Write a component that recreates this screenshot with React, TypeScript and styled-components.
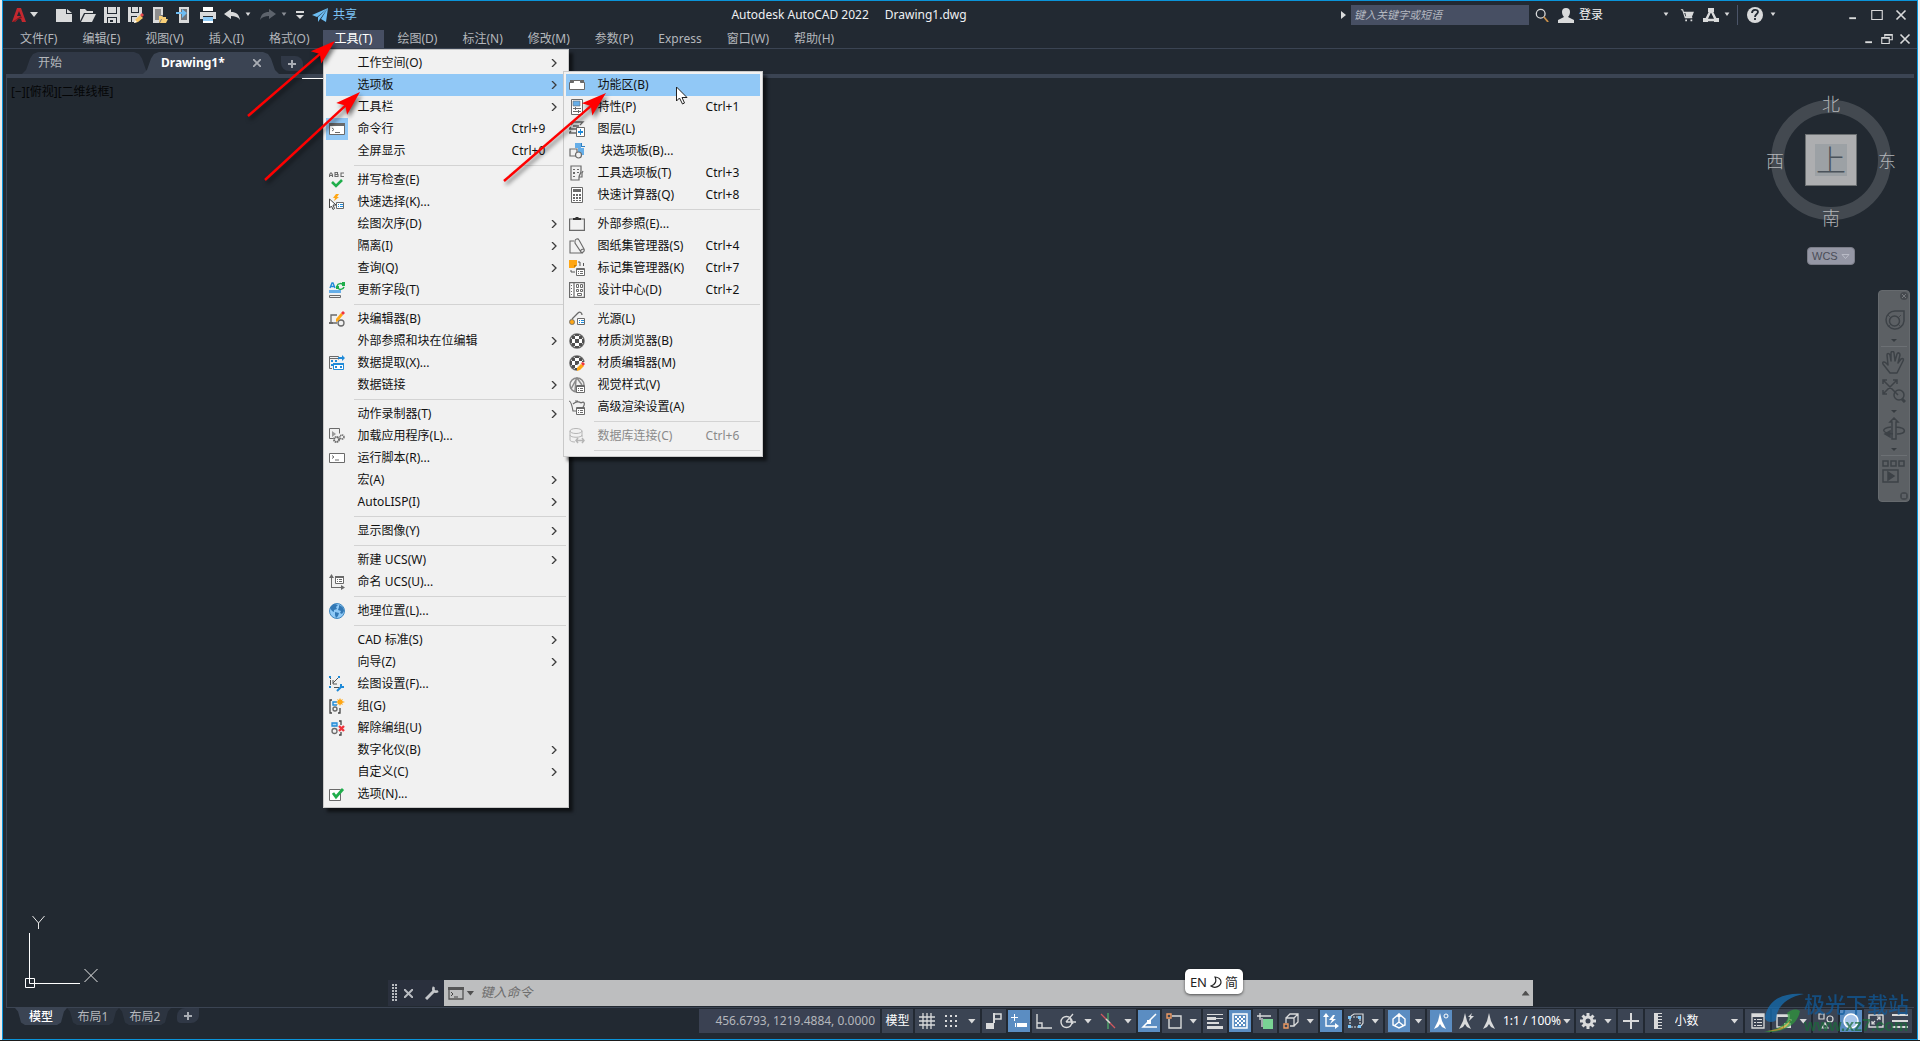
import React from "react";
import styled, { createGlobalStyle, css } from "styled-components";

/* ---------- palette ---------- */
const c = {
  chrome: "#222932",
  canvas: "#222931",
  panel: "#3b4453",
  field: "#474f63",
  active: "#5b8dc2",
  edge: "#0a94da",
  text: "#b4b7bc",
  icon: "#d9dadb",
  menu: "#f1f1f1",
  hover: "#91c8f6",
  grey: "#6a6a6a",
  blue: "#1f8ad8",
  sky: "#66aee8",
  orange: "#ffa613",
  green: "#1fae4b",
  red: "#f0343c",
};

const GlobalStyle = createGlobalStyle`
  *, *::before, *::after { box-sizing: border-box; }
  body {
    margin: 0;
    background: #1b1b1b;
    font: 12px/16px "Noto Sans", "Open Sans", "Noto Sans CJK SC", sans-serif;
    color: ${c.text};
  }
  button, input, select { font: inherit; color: inherit; }
`;

/* ---------- shared parts ---------- */
const Desktop = styled.div`
  height: 100vh;
  padding: 0 2px;
  background: #ececec;
  border-bottom: 1px solid #1b1b1b;
  overflow: hidden;
`;

const Window = styled.div`
  height: 100%;
  display: flex;
  flex-direction: column;
  background: ${c.chrome};
  border: 1px solid ${c.edge};
`;

const Plain = styled.button`
  display: flex;
  align-items: center;
  padding: 0;
  border: 0;
  background: none;
  white-space: nowrap;
`;

const Glyph = styled.svg<{ $w?: number; $h?: number }>`
  display: block;
  flex: none;
  width: ${(p) => p.$w ?? 16}px;
  height: ${(p) => p.$h ?? p.$w ?? 16}px;
  fill: none;
`;

type Art = React.ReactNode;

const Pic = ({ art, size = 16 }: { art: Art; size?: number }) => (
  <Glyph $w={size} viewBox="0 0 16 16" aria-hidden="true">
    {art}
  </Glyph>
);

const Caret = styled.span<{ $small?: boolean; $dim?: boolean }>`
  flex: none;
  width: 8px;
  height: 5px;
  background: ${(p) => (p.$dim ? "#8b8f96" : c.icon)};
  clip-path: ${(p) =>
    p.$small
      ? "polygon(20% 10%, 80% 10%, 50% 80%)"
      : "polygon(0 0, 100% 0, 50% 100%)"};
`;

/* ---------- title bar ---------- */
const TitleBar = styled.header`
  flex: none;
  height: 29px;
  display: flex;
  align-items: center;
  padding: 0 10px 2px 9px;
`;

const QuickTools = styled.div`
  display: flex;
  align-items: center;
  gap: 8px;
`;

const AppButton = styled(Plain)`
  gap: 4px;
  margin-right: 10px;
`;

const Split = styled(Plain)`
  gap: 4px;
`;

const ShareButton = styled(Plain)`
  gap: 5px;
  color: #7cc3f5;
`;

const Caption = styled.h1`
  flex: 1;
  display: flex;
  justify-content: center;
  gap: 16px;
  margin: 0;
  font-size: 12px;
  font-weight: 400;
  line-height: 16px;
  color: #eef0f2;
  white-space: nowrap;
`;

const InfoTools = styled.div`
  display: flex;
  align-items: center;
`;

const SearchBox = styled.input`
  width: 178px;
  height: 20px;
  margin: 0 6px 0 5px;
  padding: 0 3px;
  border: 0;
  background: ${c.field};
  &::placeholder {
    color: #b4b8c0;
    font-size: 11px;
    font-style: italic;
    opacity: 1;
  }
`;

const Account = styled(Plain)`
  width: 112px;
  margin: 0 10px 0 9px;
  gap: 5px;
  color: #f4f4f4;
  & > span:last-child {
    margin-left: auto;
  }
`;

const StoreTools = styled.div`
  display: flex;
  align-items: center;
  gap: 9px;
  padding-right: 6px;
  border-right: 1px solid #4b5468;
  height: 20px;
`;

const HelpButton = styled(Split)`
  gap: 6px;
  margin: 0 70px 0 9px;
`;

const WindowButtons = styled.div`
  display: flex;
  align-items: center;
  gap: 12px;
`;

/* ---------- menu bar ---------- */
const MenuBar = styled.nav`
  flex: none;
  height: 19px;
  display: flex;
  justify-content: space-between;
  padding: 0 6px 0 5px;
  border-bottom: 1px solid ${c.panel};
`;

const MenuList = styled.div`
  display: flex;
  gap: 1px;
`;

const MenuSlot = styled.div`
  position: relative;
  z-index: 5;
`;

const MenuButton = styled(Plain)<{ $open?: boolean }>`
  height: 18px;
  padding: 0 12px;
  background: ${(p) => (p.$open ? "#474f63" : "none")};
  color: ${(p) => (p.$open ? "#ffffff" : c.text)};
`;

const DocButtons = styled.div`
  display: flex;
  align-items: center;
  gap: 6px;
`;

/* ---------- drop-down menus ---------- */
const Panel = styled.div<{ $sub?: boolean }>`
  position: absolute;
  top: ${(p) => (p.$sub ? "-3px" : "19px")};
  left: ${(p) => (p.$sub ? "237px" : "0")};
  width: ${(p) => (p.$sub ? "200px" : "246px")};
  padding: 2px;
  border: 1px solid #c9c9c9;
  background: ${c.menu};
  box-shadow: 4px 4px 3px rgba(0, 0, 0, 0.55);
  color: #111111;
`;

const EntrySlot = styled.div`
  position: relative;
`;

const Entry = styled(Plain)<{ $hot?: boolean }>`
  width: 100%;
  height: 22px;
  background: ${(p) => (p.$hot ? c.hover : "none")};
  &:disabled {
    color: #8a8a8a;
  }
`;

const IconCell = styled.span<{ $checked?: boolean }>`
  flex: none;
  width: 22px;
  height: 22px;
  display: grid;
  place-items: center;
  background: ${(p) => (p.$checked ? c.hover : "none")};
`;

const EntryLabel = styled.span`
  flex: 1;
  padding-left: 10px;
  text-align: left;
`;

const Keys = styled.span`
  width: 54px;
  text-align: left;
`;

const Divider = styled.hr`
  height: 1px;
  margin: 3px 0 3px 28px;
  border: 0;
  background: #d3d3d3;
`;

const Chevron = styled(Glyph)`
  margin-right: 8px;
`;

/* ---------- document tabs ---------- */
const DocTabs = styled.div`
  flex: none;
  height: 25px;
  display: flex;
  align-items: flex-end;
  padding-left: 19px;
`;

const DocTab = styled.div<{ $active?: boolean }>`
  width: ${(p) => (p.$active ? "136px" : "128px")};
  height: 22px;
  display: flex;
  align-items: center;
  justify-content: space-between;
  margin-right: ${(p) => (p.$active ? "2px" : "-7px")};
  padding: 0 18px 0 ${(p) => (p.$active ? "18px" : "16px")};
  background: ${(p) => (p.$active ? c.panel : "#303846")};
  color: ${(p) => (p.$active ? "#ffffff" : c.text)};
  font-weight: ${(p) => (p.$active ? 700 : 400)};
  clip-path: polygon(
    0 100%, 4px 82%, 8px 30%, 11px 9%, 16px 0,
    calc(100% - 16px) 0, calc(100% - 11px) 9%, calc(100% - 8px) 30%, calc(100% - 4px) 82%, 100% 100%
  );
  button { color: inherit; font-weight: inherit; }
`;

const AddTab = styled(Plain)<{ $bottom?: boolean }>`
  width: 22px;
  height: 15px;
  justify-content: center;
  margin: ${(p) => (p.$bottom ? "0 0 0 6px" : "0 0 3px")};
  background: #303846;
  border-radius: ${(p) => (p.$bottom ? "8px 0 8px 4px" : "0 8px 4px 8px")};
`;

/* ---------- drawing area ---------- */
const Canvas = styled.main`
  position: relative;
  flex: 1;
  min-height: 0;
  display: flex;
  flex-direction: column;
  justify-content: space-between;
  align-items: flex-start;
  margin: 0 3px;
  background: ${c.canvas};
  border-top: 4px solid ${c.panel};
  border-left: 1px solid ${c.panel};
  border-bottom: 1px solid ${c.panel};
`;

const Viewport = styled.div`
  padding: 6px 4px;
  color: #050607;
`;

const Edge = styled.div`
  position: absolute;
  top: 0;
  left: 295px;
  width: 24px;
  height: 1px;
  background: #ffffff;
`;

const UcsMark = styled(Glyph)`
  position: absolute;
  left: 16px;
  bottom: 19px;
`;

const Cube = styled.div`
  position: absolute;
  top: 15px;
  right: 17px;
  width: 132px;
  display: grid;
  grid-template-columns: 20px 52px 20px;
  grid-template-rows: 20px 21px 52px 21px 20px;
  justify-content: space-between;
  justify-items: center;
  align-items: center;
  font: 18px/20px "Noto Sans CJK SC", sans-serif;
  font-weight: 300;
  color: #b3b5b8;
`;

const Ring = styled.span`
  position: absolute;
  top: 7px;
  left: 6px;
  width: 120px;
  height: 120px;
  border: 13px solid #434950;
  border-radius: 50%;
`;

const Compass = styled.button<{ $area: string }>`
  position: relative;
  grid-area: ${(p) => p.$area};
  padding: 0;
  border: 0;
  background: none;
  font: inherit;
  color: inherit;
`;

const Face = styled.button`
  position: relative;
  grid-area: 3 / 2;
  width: 52px;
  height: 52px;
  display: grid;
  place-items: center;
  padding: 0;
  border: 1px solid #6c7072;
  background: #adaeb0;
  span {
    width: 32px;
    height: 32px;
    background: #9ca1a5;
    color: #4b535b;
    font: 300 30px/28px "Noto Sans CJK SC", sans-serif;
  }
`;

const Wcs = styled.button`
  position: absolute;
  top: 169px;
  right: 59px;
  width: 48px;
  height: 18px;
  display: flex;
  align-items: center;
  justify-content: space-between;
  padding: 0 4px;
  border: 1px solid #7b7d88;
  border-radius: 4px;
  background: #9597a5;
  color: #4a4d57;
  font: 11px/14px "Liberation Sans", sans-serif;
`;

const NavBar = styled.div`
  position: absolute;
  top: 212px;
  right: 4px;
  width: 32px;
  height: 212px;
  display: flex;
  flex-direction: column;
  align-items: center;
  padding: 18px 0 0;
  border-radius: 4px;
  background: #5c6064;
  border: 1px solid #666a6e;
`;

const NavButton = styled(Plain)<{ $top?: number }>`
  margin-top: ${(p) => p.$top ?? 0}px;
`;

const NavCaret = styled.span`
  width: 6px;
  height: 3px;
  margin-top: 7px;
  background: #373c41;
  clip-path: polygon(0 0, 100% 0, 50% 100%);
`;

const NavRule = styled.hr`
  width: 26px;
  height: 1px;
  margin: 4px 0;
  border: 0;
  background: #6c7074;
`;

const NavCorner = styled(Plain)<{ $low?: boolean }>`
  position: absolute;
  right: 1px;
  ${(p) => (p.$low ? css`bottom: 1px;` : css`top: 1px;`)}
`;

const CommandLine = styled.form`
  width: 60%;
  height: 26px;
  display: flex;
  align-items: stretch;
  margin: 0 auto 1px;
  background: #bdbebf;
`;

const CommandGrip = styled.div`
  width: 56px;
  display: flex;
  align-items: center;
  justify-content: space-between;
  padding: 0 5px 0 4px;
  background: #2a303d;
  & > :nth-child(2) {
    margin-right: 6px;
  }
`;

const CommandInput = styled.input`
  flex: 1;
  padding: 0 6px;
  border: 0;
  background: none;
  outline: 0;
  color: #333333;
  &::placeholder {
    color: #6d6d6d;
    font-size: 13px;
    font-style: italic;
    opacity: 1;
  }
`;

const PromptButton = styled(Plain)`
  gap: 2px;
  padding-left: 4px;
`;

const DarkCaret = styled.span<{ $up?: boolean }>`
  width: 8px;
  height: 5px;
  margin: ${(p) => (p.$up ? "auto 3px auto 0" : "0")};
  background: #505050;
  clip-path: ${(p) =>
    p.$up ? "polygon(0 100%, 50% 0, 100% 100%)" : "polygon(0 0, 100% 0, 50% 100%)"};
`;

const ImeBadge = styled.div`
  position: absolute;
  right: 671px;
  bottom: 13px;
  height: 25px;
  display: flex;
  align-items: center;
  gap: 3px;
  padding: 0 5px;
  border-radius: 5px;
  background: #ffffff;
  box-shadow: 0 1px 3px rgba(0, 0, 0, 0.6);
  color: #222222;
  font-size: 13px;
`;

/* ---------- footer ---------- */
const Footer = styled.footer`
  flex: none;
  height: 31px;
  display: flex;
  justify-content: space-between;
  align-items: flex-start;
  padding: 0 5px 0 12px;
`;

const LayoutTabs = styled.div`
  display: flex;
`;

const LayoutTab = styled(Plain)<{ $active?: boolean }>`
  height: 17px;
  justify-content: center;
  width: 52px;
  background: ${(p) => (p.$active ? c.panel : "#2c3440")};
  color: ${(p) => (p.$active ? "#ffffff" : c.text)};
  font-weight: ${(p) => (p.$active ? 500 : 400)};
  clip-path: polygon(0 0, 100% 0, calc(100% - 3px) 20%, calc(100% - 6px) 85%, calc(100% - 10px) 100%, 10px 100%, 6px 85%, 3px 20%);
`;

const StatusBar = styled.div`
  display: flex;
  gap: 2px;
  margin-top: 1px;
`;

const Coordinates = styled.output`
  width: 181px;
  height: 24px;
  padding: 0 5px;
  background: #3a4152;
  text-align: right;
  line-height: 24px;
`;

const StatusGroup = styled.div<{ $w: number }>`
  width: ${(p) => p.$w}px;
  height: 24px;
  display: flex;
  align-items: center;
  justify-content: space-around;
  background: ${c.panel};
`;

const StatusButton = styled(Plain)<{ $on?: boolean }>`
  height: ${(p) => (p.$on ? "22px" : "24px")};
  width: ${(p) => (p.$on ? "22px" : "auto")};
  margin: ${(p) => (p.$on ? "1px 0" : "0")};
  justify-content: center;
  background: ${(p) => (p.$on ? c.active : "none")};
  color: #ffffff;
`;

const StatusSelect = styled.label<{ $w: number }>`
  width: ${(p) => p.$w}px;
  display: flex;
  align-items: center;
  justify-content: space-between;
  color: #ffffff;
  select {
    flex: 1;
    min-width: 0;
    appearance: none;
    padding: 0;
    border: 0;
    background: none;
  }
`;

/* ---------- overlays ---------- */
const Marks = styled(Glyph)`
  position: absolute;
  top: 34px;
  left: 240px;
  z-index: 9;
  pointer-events: none;
  filter: drop-shadow(2px 3px 2px rgba(0, 0, 0, 0.55));
`;

const Pointer = styled(Glyph)`
  position: absolute;
  top: 86px;
  left: 676px;
  z-index: 9;
`;

const Watermark = styled.div`
  position: absolute;
  right: 11px;
  bottom: 7px;
  display: flex;
  align-items: center;
  opacity: 0.72;
  pointer-events: none;
`;

const WatermarkText = styled.div`
  display: flex;
  flex-direction: column;
  gap: 4px;
  font: 500 21px/22px "Noto Sans CJK SC", sans-serif;
  color: #0f5c9e;
  small {
    font: 700 16px/16px "Liberation Sans", sans-serif;
    color: #1a6b3a;
  }
`;

/* ---------- icon drawings ---------- */
const L = c.icon;
const G = c.grey;

const top: Record<string, Art> = {
  create: <path fill={L} d="M0 2h10v5h6v8H0zM11 2l5 4h-5z" />,
  open: <path fill={L} d="M0 14V2h5l2 2h6v2H4zM1 15 5 7h11l-4 8z" />,
  save: (
    <>
      <path fill={L} d="M0 0h16v16H0z" />
      <path fill={c.chrome} d="M3 0h1v6h8V0h1v7H3zM3 10h10v1H4v5H3zM12 11h1v5h-1zM6 13h3v2H6z" />
    </>
  ),
  saveAs: (
    <>
      <path fill={L} d="M0 0h14v8l-6 7H0z" />
      <path fill={c.chrome} d="M3 0h1v5h6V0h1v6H3zM3 9h6v1H4v5H3z" />
      <path fill="#f7c766" d="m7 13 5-5 3 3-5 4-4 1z" />
      <path fill="#e8484a" d="m12 8 2-2 2 2-2 2z" />
      <path fill="#fff" d="m7 13 2 2-3 1z" />
    </>
  ),
  openWeb: (
    <>
      <path fill="#747474" d="M1 0h10v16H1z" />
      <path fill={L} d="M1 0h10v8H9V2H3v11h4v3H1z" />
      <path fill="#8d8d8d" d="M3 2h6v11H3z" />
      <path fill="#f8cf78" d="M7 9h3l1 1h3v2H9l-2 4zM8 16l2-4h6l-2 4z" />
    </>
  ),
  saveWeb: (
    <>
      <path fill={L} d="M3 0h10v16H3z" />
      <path fill="#6f747b" d="M5 2h6v11H5z" />
      <path fill="#6ebcf2" d="M0 5h6V2l5 4-5 5V7H0z" />
    </>
  ),
  print: (
    <>
      <path fill="#fff" d="M3 0h10v4H3z" />
      <path fill={L} d="M0 5h16v7h-3V9H3v3H0z" />
      <path fill="#8ecbf7" d="M3 10h10v4H3z" />
      <path fill="#fff" d="M3 14h10v2H3z" />
    </>
  ),
  undo: <path fill={L} d="m0 7 7-5v3c5 0 8 2 9 8-2-3-5-4-9-4v3z" />,
  redo: <path fill="#5d636c" d="m16 7-7-5v3c-5 0-8 2-9 8 2-3 5-4 9-4v3z" />,
  share: <path fill="#6dbdf2" d="M16 1 0 8l5 2zM16 1 6 10v5l2-3zM16 1l-7 11 5 3z" />,
  find: (
    <>
      <circle cx="6.500" cy="6.500" r="5" stroke={L} strokeWidth="1.500" />
      <path stroke="#c98f4a" strokeWidth="2" d="m10 10 5 6" />
    </>
  ),
  person: <path fill={L} d="M4 5a4 4 0 0 1 8 0c0 2-1 4-2 5l6 3v3H0v-3l6-3C5 9 4 7 4 5z" />,
  cart: (
    <>
      <path stroke={L} strokeWidth="1.300" d="M1 2h2l3 9h8M4 5h11l-2 5H6" />
      <path fill={L} d="M6 5h9l-2 5H7zM6 13h2v2H6zm6 0h2v2h-2z" />
    </>
  ),
  a360: (
    <>
      <path stroke={L} strokeWidth="2.500" d="M8 3 3 13h10z" strokeLinejoin="round" />
      <path fill={L} d="M5 1h6v4H5zM0 11h5v4H0zm11 0h5v4h-5z" />
      <path fill={c.chrome} d="M8 6 6 11h4z" />
    </>
  ),
  min: <path fill={L} d="M3 11h9v2.500H3z" />,
  max: <path stroke={L} strokeWidth="1.500" d="M1 2h14v12H1z" />,
  close: <path stroke={L} strokeWidth="2.200" d="m2 2 12 12M14 2 2 14" />,
  restore: <path stroke={L} strokeWidth="1.500" d="M5 5V2h10v7h-4M1 6h10v8H1zM5 3h10M1 7h10" />,
};

const sheet = (x: number, y: number, col = G) => (
  <>
    <path fill="#fff" stroke={col} d={`M${x}.5 ${y}.5h7v6h-7z`} />
    <path fill={c.blue} d={`M${x + 2} ${y + 2}h1v1h-1zm2 0h3v1h-3zm-2 2h1v1h-1zm2 0h3v1h-3z`} />
  </>
);

const greySheet = (
  <>
    <path fill="#fff" stroke={G} d="M7.500 8.500h8v7h-8zM7 9.500h9" />
    <path fill={G} d="M9 11h1v1H9zm2 0h3v1h-3zm-2 2h1v1H9zm2 0h3v1h-3z" />
  </>
);

const checkBall = (
  <>
    <circle cx="8" cy="8" r="7" fill="#fff" stroke={G} strokeWidth="1.600" />
    <path fill="#4f4f4f" d="M6 6h4v4H6zM3 3h3v3H3zm7 0h3v3h-3zM3 10h3v3H3zm7 0h3v3h-3zM6 1h4v2H6zm0 12h4v2H6zM1 6h2v4H1zm12 0h2v4h-2z" />
  </>
);

const art: Record<string, Art> = {
  prompt: (
    <>
      <path fill="#fff" stroke={G} d="M.5 2.500h15v11H.5z" />
      <path fill={G} d="M0 2h16v3H0z" />
      <path stroke={G} d="m3 7 2 1.500L3 10M6 11.500h5" />
    </>
  ),
  spell: (
    <>
      <path stroke={G} strokeWidth="1.100" d="M.5 5V3l1-2h1l1 2v2M.5 3.500h3M6 .5h2.500v2H6zm0 2h3v2H6zM15 1h-3v3.500h3" />
      <path stroke={c.green} strokeWidth="2.600" d="m3 10 4 4 6-6" />
    </>
  ),
  quick: (
    <>
      <path fill="#fff" stroke="#444" d="M.5 5v9l2-2 1.500 3.500 1.500-1L4 11h3z" />
      <path fill={c.orange} d="M7 0 4 4h2L5 7l5-4H8l2-3z" />
      {sheet(7, 8)}
    </>
  ),
  field: (
    <>
      <path stroke={c.blue} strokeWidth="1.400" d="m1 6 2-5h1l2 5M2 4.500h3" />
      <path stroke={c.green} strokeWidth="1.500" d="M8 4c1-3 5-3 6-1M15 5c-1 3-5 3-6 1" />
      <path fill={c.green} d="M13 0h3v4h-3zM7 4h3v3H7z" />
      <path fill={c.sky} d="M0 8h12v3H0z" />
      <path stroke={G} d="M.5 13.500h11v2H.5z" />
    </>
  ),
  blockEdit: (
    <>
      <path stroke={G} strokeWidth="1.300" d="M2 12V4h6M2 12h6" />
      <path fill={G} d="M0 11h4v2H0z" />
      <circle cx="12" cy="12" r="3" stroke={G} strokeWidth="1.300" />
      <path fill={c.orange} d="m7 8 5-6 2 2-5 6-2 1z" />
      <path fill={c.red} d="m12 2 2-2 2 2-2 2z" />
    </>
  ),
  extract: (
    <>
      <path stroke={G} d="M3 13.500H.5V1.500h9v3M0 3.500h9" />
      <path fill={c.blue} d="M2 5h2v2H2zm4 0h2v2H6zM2 9h2v2H2zM9 2h4V0l3 3-3 3V4H9z" />
      <path stroke={c.blue} fill="#fff" d="M4.500 8.500h10v6h-10z" />
      <path fill={c.blue} d="M4 8h11v2H4zM6 11h2v2H6zm5 0h2v2h-2z" />
    </>
  ),
  load: (
    <>
      <path stroke={G} d="M4 10.500H.5V.5h10v5" />
      <path fill="#9a9a9a" d="M3 3v6l4-3z" />
      <circle cx="7.500" cy="11.500" r="2.500" stroke={G} strokeWidth="2" strokeDasharray="1.500 .5" />
      <circle cx="13" cy="9" r="2" stroke={G} strokeWidth="1.500" strokeDasharray="1.200 .5" />
    </>
  ),
  script: (
    <>
      <path fill="#fff" stroke={G} d="M.5 3.500h15v9H.5z" />
      <path stroke={G} d="m3 5.500 2 1.500-2 1.500M6 10h4" />
    </>
  ),
  ucs: (
    <>
      <path stroke={G} d="M2.500 14V3M2 13.500h12" />
      <path fill={G} d="M0 4h5L2.500 0zM12 11v5l4-2.500z" />
      <path fill="#fff" stroke={G} d="M6.500 2.500h8v7h-8z" />
      <path fill={G} d="M6 2h9v2H6zM8 5h1v1H8zm2 0h3v1h-3zM8 7h1v1H8zm2 0h3v1h-3z" />
    </>
  ),
  globe: (
    <>
      <circle cx="8" cy="8" r="7.500" fill="#8fc9f6" stroke="#3f87bf" />
      <path fill="#3278b5" d="M1 5c1-2 3-4 5-4l3 1-2 2 1 2-3 1v2L3 8zM10 2c3 1 5 3 5 6l-2 3-2-1 1-2-3-1 1-3zM6 9l4 1-1 3-2 2-1-3z" />
    </>
  ),
  draft: (
    <>
      <path stroke="#555" d="M1.500 1v2M1.500 4v5M9 2 4 7M4 4v4h4M5 11.500h5" />
      <path fill={c.blue} d="M0 0h2v2H0zM9 0h2v2H9zM0 10h2v2H0z" />
      <path stroke={c.blue} strokeWidth="2" d="m8 15 4-4M12 8v3h3" />
    </>
  ),
  group: (
    <>
      <path stroke="#444" strokeWidth="1.300" d="M3 2H1v13h2M9 15h2v-5" />
      <path stroke={c.blue} strokeWidth="1.400" d="M8 4H4v3h4" />
      <circle cx="6" cy="11" r="2" stroke={G} strokeWidth="1.400" />
      <path fill={c.orange} d="m11 0 1 2 2-1-1 2 3 1-3 1 1 2-2-1-1 2-1-2-2 1 1-2-2-1 2-1-1-2 2 1z" />
    </>
  ),
  ungroup: (
    <>
      <path stroke="#444" strokeWidth="1.300" d="M10 1h2v4M12 12v3h-2" />
      <path fill="#a8d5f7" stroke={c.blue} strokeWidth="1.300" d="M3 3h5v3H3z" />
      <circle cx="5.500" cy="11" r="2.500" stroke={G} strokeWidth="1.300" />
      <path stroke={c.red} strokeWidth="2.400" d="m10 6 5 5M15 6l-5 5" />
    </>
  ),
  options: (
    <>
      <path fill="#fff" stroke={G} d="M.5 3.500h11v11H.5z" />
      <path stroke={c.green} strokeWidth="2.800" d="m4 7 3 4 7-8" />
    </>
  ),
  ribbon: (
    <>
      <path fill={G} d="M1 3h4v3H1zm10 0h4v3h-4z" />
      <path fill="#fff" stroke={G} d="M.5 12.500v-7h4v-2h7v2h4v7z" />
    </>
  ),
  props: (
    <>
      <path fill="#fff" stroke={G} d="M2.500.5h11v15h-11z" />
      <path fill={c.sky} stroke={G} strokeWidth=".6" d="M4 2h7v5H4z" />
      <path stroke={G} d="M4 9.500h8M4 12.500h8M6.500 8v3M9.500 11v3" />
    </>
  ),
  layers: (
    <>
      <path stroke={G} strokeWidth="1.300" d="M2 4 5 1h9l-3 3M0 8h7M0 12h7M2 6l-2 2M2 10l-2 2M4 5h6" />
      <path fill="#fff" stroke={G} d="M7.500 6.500h8v9h-8z" />
      <path fill={c.blue} d="M9 10h5v2H9zM11 8h1v6h-1z" />
    </>
  ),
  blocks: (
    <>
      <path fill={c.sky} d="M6 0h6v5H6zM9 5h6v7H9z" />
      <path fill="#2f7fc2" d="M12 0h1v3h3v1h-4z" />
      <path fill={c.menu} stroke={G} strokeWidth="1.200" d="M1 13V6h7v7z" />
      <circle cx="9.500" cy="12" r="3" stroke={G} strokeWidth="1.200" fill={c.menu} />
    </>
  ),
  toolPal: (
    <>
      <path stroke={G} strokeWidth="1.200" d="M12 6V1H2v14h8v-3M12 6c0 3-2 4-2 6h3V8l1-2" />
      <path fill={G} d="M4 4h2v1H4zm4 0h2v1H8zM4 7h2v2H4zm4 0h2v1H8zM4 11h2v1H4z" />
    </>
  ),
  calc: (
    <>
      <path stroke={G} fill="#fff" d="M2.500.5h11v15h-11z" />
      <path fill={G} d="M4 2h8v3H4zM4 7h2v2H4zm3 0h2v2H7zm3 0h2v2h-2zM4 10h2v2H4zm3 0h2v2H7zm3 0h2v2h-2zM4 13h2v1H4zm3 0h2v1H7zm3 0h2v1h-2z" />
    </>
  ),
  xref: (
    <>
      <path stroke={G} strokeWidth="1.200" d="M4 3H.6v11.400h14.800V3H12" />
      <path fill="#333" d="M4 2h2l1-1h2l1 1h2v2H4z" />
    </>
  ),
  sheets: (
    <>
      <path stroke={G} strokeWidth="1.100" d="M5 3H1v12h13M6 3c0-2 3-3 4-1l5 9c1 2-1 4-3 3L6 5zM12 14c-1-1 0-3 3-3" />
    </>
  ),
  markup: (
    <>
      <path fill={c.orange} d="M0 0h8v5L5 8H0z" />
      <path fill="#c97f00" d="M5 5h3L5 8z" />
      <path stroke="#555" d="M9 2h2v4M14.500 3v3M2 10v2h4" />
      {greySheet}
    </>
  ),
  design: (
    <>
      <path stroke={G} strokeWidth="1.200" fill="#fff" d="M.6.6h14.800v14.800H.6zM5 1v14" />
      <path stroke={G} d="M7.500 2.500h2v3h-2zm4 0h2v3h-2zm-4 5h2v2h-2zm4 0h2v2h-2zM8.500 11.500h4v2h-4zM2.500 3v1M2.500 6v1M2.500 9v1M2.500 12v1" />
    </>
  ),
  light: (
    <>
      <path stroke={G} strokeWidth="1.300" d="m3 8 6-6c2-2 4 0 4 2M1 9l4 4" />
      <circle cx="3" cy="11" r="2.500" fill={c.orange} stroke={G} strokeWidth=".8" />
      {sheet(8, 7)}
    </>
  ),
  matBrowse: checkBall,
  matEdit: (
    <>
      {checkBall}
      <path fill={c.menu} d="M8 10 12 7h4v9H8z" />
      <path fill={c.orange} d="m8 13 4-4 3 2-4 4-3 1z" />
      <path fill={c.red} d="m12 8 2-1 2 2-2 2z" />
    </>
  ),
  visual: (
    <>
      <circle cx="8" cy="8" r="7" stroke="#8a8a8a" strokeWidth="1.500" />
      <path stroke="#8a8a8a" strokeWidth="1.500" d="M2 12 8 1l5 7M6 14 7 3" />
      {greySheet}
    </>
  ),
  render: (
    <>
      <path stroke={G} strokeWidth="1.200" d="M0 2c2 0 3 4 4 10h4M4 5c2-2 6-3 8-1M6 2h3M12 4c4-3 4 2 2 4" />
      {greySheet}
    </>
  ),
  db: (
    <g stroke="#b5b5b5">
      <ellipse cx="7" cy="3" rx="6" ry="2.500" />
      <path d="M1 3v9c0 1 2 2 5 2M13 3v6M1 7c0 3 12 3 12 0" />
      <path strokeWidth="1.500" d="M7 12.500h8M9 10l-2 2.500L9 15M13 10l2 2.500-2 2.500" />
    </g>
  ),
};

const status: Record<string, Art> = {
  grid: <path stroke={L} strokeWidth="1.300" d="M4 0v16M8 0v16M12 0v16M0 4h16M0 8h16M0 12h16" />,
  snap: <path fill={L} d="M2 2h2v2H2zm5 0h2v2H7zm5 0h2v2h-2zM2 7h2v2H2zm5 0h2v2H7zm5 0h2v2h-2zM2 12h2v2H2zm5 0h2v2H7zm5 0h2v2h-2z" />,
  infer: (
    <>
      <path fill={L} d="M0 10h8v6H0zM7 0h2v10H7z" />
      <path stroke={L} strokeWidth="1.500" d="M8 1h7v5H8z" />
    </>
  ),
  dynamic: <path fill="#fff" d="M0 4h3V1h1v3h3v1H4v3H3V5H0zM6 10h10v4H6zM4 10h1v4H4z" />,
  ortho: <path stroke={L} strokeWidth="1.400" d="M1 1v14h15M1 10h5v5" />,
  polar: (
    <>
      <circle cx="6.500" cy="9" r="5.500" stroke={L} strokeWidth="1.400" />
      <path stroke={L} strokeWidth="1.300" d="M6 9h10M6 9l7-8M10 6l3 5" />
    </>
  ),
  iso: (
    <>
      <path stroke="#d2575f" strokeWidth="1.300" d="m1 1 14 14" />
      <path stroke="#4fae69" strokeWidth="1.300" d="M8 0v16" />
      <path stroke={L} strokeWidth="1.500" d="m6 6 4 4" />
    </>
  ),
  track: (
    <>
      <path stroke="#fff" strokeWidth="1.500" d="M15 1 2 14h14" />
      <path fill="#fff" d="M6 7h4v4H6z" />
    </>
  ),
  osnap: (
    <>
      <path stroke={L} strokeWidth="1.400" d="M6 3h9v12H3V6" />
      <path stroke="#ef9a63" strokeWidth="1.400" d="M1 1h4v4H1z" />
    </>
  ),
  weight: <path fill={L} d="M0 1h16v1H0zM0 4h9v3H0zM9 5h7v1H9zM0 9h12v2H0zM0 13h16v3H0z" />,
  transp: (
    <>
      <path stroke="#fff" strokeWidth="1.500" d="M1 1h14v14H1z" />
      <path fill="#fff" d="M3 3h2v2H3zm4 0h2v2H7zm4 0h2v2h-2zM5 5h2v2H5zm4 0h2v2H9zM3 7h2v2H3zm4 0h2v2H7zm4 0h2v2h-2zM5 9h2v2H5zm4 0h2v2H9zm-6 2h2v2H3zm4 0h2v2H7zm4 0h2v2h-2z" />
    </>
  ),
  cycle: (
    <>
      <path stroke={L} strokeWidth="1.300" d="M3 0v7M0 3h14M5 5v9" />
      <path fill="#79d394" d="M6 6h10v10H6z" />
    </>
  ),
  osnap3d: (
    <>
      <path stroke={L} strokeWidth="1.300" d="M3 10V5h8v8H7M3 5l4-4h8v8l-4 4M11 5l4-4" />
      <path stroke="#ef9a63" strokeWidth="1.400" d="M1 11h4v4H1z" />
    </>
  ),
  ducs: (
    <>
      <path stroke="#fff" strokeWidth="1.400" d="M3 2v11h11" />
      <path fill="#fff" d="M0 4h6L3 0zM12 10v6l4-3zM10 2 6 7h3l-2 4 6-5h-3l2-4z" />
    </>
  ),
  filter: (
    <>
      <path stroke={L} strokeWidth="1.200" strokeDasharray="2 1" d="M2 4h10v10H2z" />
      <path stroke={L} strokeWidth="1.200" d="m3 3 3-2h9v9l-2 3" />
      <path fill="#7cc6fa" d="M0 3h3v3H0zm10 0h3v3h-3zM0 12h3v3H0zm10 0h3v3h-3z" />
    </>
  ),
  gizmo: (
    <>
      <path stroke="#fff" strokeWidth="1.400" d="M8 1 2 6v6l6 3 6-3V6zM8 4v5l-5 4M8 9l5 4" />
      <path fill="#fff" d="M6 4h4L8 0z" />
    </>
  ),
  scaleVis: (
    <>
      <path fill="#fff" d="M7 0 5 8l-4 8 4-2 2-3 2 3 4 2-4-8z" />
      <circle cx="13" cy="3" r="2" stroke="#fff" />
    </>
  ),
  scaleAuto: <path fill={L} d="M7 0 5 8l-4 8 4-2 2-3 2 3 4 2-4-8zM14 0l-4 4h2l-1 4 5-5h-3z" />,
  scale: <path fill={L} d="M8 0 6 8l-4 8 4-2 2-3 2 3 4 2-4-8z" />,
  gear: (
    <>
      <circle cx="8" cy="8" r="4" stroke={L} strokeWidth="3" />
      <path stroke={L} strokeWidth="3" d="M8 0v3M8 13v3M0 8h3M13 8h3M2.500 2.500l2 2M11.500 11.500l2 2M13.500 2.500l-2 2M4.500 11.500l-2 2" />
    </>
  ),
  plus: <path fill={L} d="M7 0h2v7h7v2H9v7H7V9H0V7h7z" />,
  ruler: <path fill={L} d="M4 0h8v1H8v2h4v1H8v2h4v1H8v2h4v1H8v2h4v1H8v2h4v2H4z" />,
  quickProps: (
    <>
      <path stroke={L} strokeWidth="1.300" d="M2 1h12v14H2z" />
      <path fill={L} d="M2 1h12v3H2zM4 6h2v1H4zm3 0h5v1H7zM4 9h2v1H4zm3 0h5v1H7zm-3 3h2v1H4zm3 0h5v1H7z" />
    </>
  ),
  lock: (
    <>
      <path stroke={L} strokeWidth="1.400" d="M7 14H1V2h12v5" />
      <path fill={L} d="M1 2h12v2H1zM8 10h7v5H8z" />
      <path stroke={L} strokeWidth="1.200" d="M12 10V8c0-2 4-2 4 0" />
    </>
  ),
  isolate: (
    <>
      <path stroke={L} strokeWidth="1.200" d="M1 1h5v5H1zM4 15l3-5 3 5z" />
      <circle cx="12" cy="6" r="3" stroke={L} strokeWidth="1.200" />
    </>
  ),
  graphics: <circle cx="8" cy="8" r="7" fill="#a9c6ea" stroke="#fff" strokeWidth="1.500" />,
  clean: (
    <>
      <path stroke={L} strokeWidth="1.400" d="M1 2h14v12H1z" />
      <path stroke={L} strokeWidth="1.200" d="m4 11 3-3M9 7l3-3M4 8v3h3M9 4h3v3" />
    </>
  ),
  custom: <path fill={L} d="M0 1h16v2H0zM0 7h16v2H0zM0 13h16v2H0z" />,
};

const D = "#3d4247";
const nav: Record<string, Art> = {
  wheel: (
    <g stroke={D} strokeWidth="1.500">
      <path d="M12 2h9v10a9 9 0 1 1-9-10z" />
      <circle cx="11.500" cy="12" r="5" />
      <path d="m5 18 3-3M15 15l3 3M5 6l3 3M15 9l3-3" strokeWidth=".8" />
    </g>
  ),
  hand: (
    <path stroke={D} strokeWidth="1.500" strokeLinejoin="round" d="M8 22 1 13c-1-2 1-3 3-1l2 2L5 4c0-2 2-2 3 0l1 6V2c0-2 3-2 3 0l1 8 2-7c1-2 3-1 3 1l-2 8 3-4c2-1 3 0 2 2l-4 8-2 4z" />
  ),
  zoom: (
    <g stroke={D} strokeWidth="1.500">
      <path d="m1 1 15 15M15 1 1 15M1 5V1h4M11 1h4v4M1 11v4h4" />
      <circle cx="17" cy="16" r="5" />
      <path strokeWidth="3" d="m20 20 3 3" />
    </g>
  ),
  orbit: (
    <g stroke={D} strokeWidth="1.500">
      <path d="M10 22V5H8l4-4 4 4h-2v17zM9 10c-10 1-10 6 2 7M14 10c12 1 10 7 1 7" />
      <path fill={D} d="m3 17 5-3v6z" />
    </g>
  ),
  motion: (
    <g stroke={D} strokeWidth="1.500">
      <path d="M1 1h5v5H1zM9 1h5v5H9zM17 1h5v5h-5zM1 10h15v12H1z" />
      <path fill={D} d="m6 12 6 4-6 4z" />
    </g>
  ),
};

/* ---------- menu contents ---------- */
interface Item {
  label?: string;
  icon?: string;
  keys?: string;
  more?: boolean;
  checked?: boolean;
  disabled?: boolean;
  hot?: boolean;
  children?: Item[];
}
const rule: Item = {};

const paletteMenu: Item[] = [
  { label: "功能区(B)", icon: "ribbon", hot: true },
  { label: "特性(P)", icon: "props", keys: "Ctrl+1" },
  { label: "图层(L)", icon: "layers" },
  { label: "\u00a0块选项板(B)...", icon: "blocks" },
  { label: "工具选项板(T)", icon: "toolPal", keys: "Ctrl+3" },
  { label: "快速计算器(Q)", icon: "calc", keys: "Ctrl+8" },
  rule,
  { label: "外部参照(E)...", icon: "xref" },
  { label: "图纸集管理器(S)", icon: "sheets", keys: "Ctrl+4" },
  { label: "标记集管理器(K)", icon: "markup", keys: "Ctrl+7" },
  { label: "设计中心(D)", icon: "design", keys: "Ctrl+2" },
  rule,
  { label: "光源(L)", icon: "light" },
  { label: "材质浏览器(B)", icon: "matBrowse" },
  { label: "材质编辑器(M)", icon: "matEdit" },
  { label: "视觉样式(V)", icon: "visual" },
  { label: "高级渲染设置(A)", icon: "render" },
  rule,
  { label: "数据库连接(C)", icon: "db", keys: "Ctrl+6", disabled: true },
  rule,
];

const toolsMenu: Item[] = [
  { label: "工作空间(O)", more: true },
  { label: "选项板", more: true, hot: true, children: paletteMenu },
  { label: "工具栏", more: true },
  { label: "命令行", icon: "prompt", keys: "Ctrl+9", checked: true },
  { label: "全屏显示", keys: "Ctrl+0" },
  rule,
  { label: "拼写检查(E)", icon: "spell" },
  { label: "快速选择(K)...", icon: "quick" },
  { label: "绘图次序(D)", more: true },
  { label: "隔离(I)", more: true },
  { label: "查询(Q)", more: true },
  { label: "更新字段(T)", icon: "field" },
  rule,
  { label: "块编辑器(B)", icon: "blockEdit" },
  { label: "外部参照和块在位编辑", more: true },
  { label: "数据提取(X)...", icon: "extract" },
  { label: "数据链接", more: true },
  rule,
  { label: "动作录制器(T)", more: true },
  { label: "加载应用程序(L)...", icon: "load" },
  { label: "运行脚本(R)...", icon: "script" },
  { label: "宏(A)", more: true },
  { label: "AutoLISP(I)", more: true },
  rule,
  { label: "显示图像(Y)", more: true },
  rule,
  { label: "新建 UCS(W)", more: true },
  { label: "命名 UCS(U)...", icon: "ucs" },
  rule,
  { label: "地理位置(L)...", icon: "globe" },
  rule,
  { label: "CAD 标准(S)", more: true },
  { label: "向导(Z)", more: true },
  { label: "绘图设置(F)...", icon: "draft" },
  { label: "组(G)", icon: "group" },
  { label: "解除编组(U)", icon: "ungroup" },
  { label: "数字化仪(B)", more: true },
  { label: "自定义(C)", more: true },
  { label: "选项(N)...", icon: "options" },
];

const menus = [
  "文件(F)", "编辑(E)", "视图(V)", "插入(I)", "格式(O)", "工具(T)", "绘图(D)",
  "标注(N)", "修改(M)", "参数(P)", "Express", "窗口(W)", "帮助(H)",
];

const Menu = ({ items, sub }: { items: Item[]; sub?: boolean }) => (
  <Panel $sub={sub} role="menu">
    {items.map((it, i) =>
      it.label ? (
        <EntrySlot key={i}>
          <Entry role="menuitem" $hot={it.hot} disabled={it.disabled}>
            <IconCell $checked={it.checked}>{it.icon && <Pic art={art[it.icon]} />}</IconCell>
            <EntryLabel>{it.label}</EntryLabel>
            {it.keys && <Keys>{it.keys}</Keys>}
            {it.more && (
              <Chevron $w={8} viewBox="0 0 8 8">
                <path stroke="#3c3c3c" strokeWidth="1.300" d="m2 0 4 4-4 4" />
              </Chevron>
            )}
          </Entry>
          {it.children && <Menu items={it.children} sub />}
        </EntrySlot>
      ) : (
        <Divider key={i} />
      )
    )}
  </Panel>
);

const Status = ({ icon, on }: { icon: string; on?: boolean }) => (
  <StatusButton $on={on} aria-label={icon} aria-pressed={!!on}>
    <Pic art={status[icon]} />
  </StatusButton>
);

const arrows = [
  { from: [8, 82], to: [95, 7] },
  { from: [25, 146], to: [120, 58] },
  { from: [264, 147], to: [366, 59] },
];

export default function App() {
  return (
    <>
      <GlobalStyle />
      <Desktop>
        <Window>
          <TitleBar>
            <QuickTools>
              <AppButton aria-label="AutoCAD">
                <Glyph $w={14} viewBox="0 0 14 14">
                  <path fill="#c3282f" d="M5 0h4l5 14h-4L9 11H6L3 14H0z" />
                  <path fill={c.chrome} d="m7 3 2 5H5z" />
                  <path fill="#7d1a20" d="m0 14 9-6 1 2-6 2-1 2z" />
                </Glyph>
                <Caret />
              </AppButton>
              {["create", "open", "save", "saveAs", "openWeb", "saveWeb", "print"].map((k) => (
                <Plain key={k} aria-label={k}><Pic art={top[k]} /></Plain>
              ))}
              <Split aria-label="undo"><Pic art={top.undo} /><Caret $small /></Split>
              <Split aria-label="redo"><Pic art={top.redo} /><Caret $small $dim /></Split>
              <Plain aria-label="customize">
                <Glyph $w={8} viewBox="0 0 8 8"><path fill={L} d="M0 0h8v2H0zM0 4h8L4 8z" /></Glyph>
              </Plain>
              <ShareButton><Pic art={top.share} />共享</ShareButton>
            </QuickTools>
            <Caption><span>Autodesk AutoCAD 2022</span><span>Drawing1.dwg</span></Caption>
            <InfoTools>
              <Glyph $w={5} $h={8} viewBox="0 0 5 8"><path fill={L} d="M0 0v8l5-4z" /></Glyph>
              <SearchBox aria-label="搜索" placeholder="键入关键字或短语" />
              <Plain aria-label="search"><Pic art={top.find} size={14} /></Plain>
              <Account><Pic art={top.person} /><span>登录</span><Caret $small /></Account>
              <StoreTools>
                <Plain aria-label="store"><Pic art={top.cart} size={14} /></Plain>
                <Split aria-label="apps"><Pic art={top.a360} /><Caret $small /></Split>
              </StoreTools>
              <HelpButton aria-label="help">
                <Glyph viewBox="0 0 16 16">
                  <circle cx="8" cy="8" r="8" fill={L} />
                  <path stroke={c.chrome} strokeWidth="1.800" d="M5 6c0-4 6-4 6-1 0 2-3 2-3 5M8 11v2" />
                </Glyph>
                <Caret $small />
              </HelpButton>
              <WindowButtons>
                {["min", "max", "close"].map((k) => (
                  <Plain key={k} aria-label={k}><Pic art={top[k]} size={12} /></Plain>
                ))}
              </WindowButtons>
            </InfoTools>
          </TitleBar>

          <MenuBar>
            <MenuList>
              {menus.map((m) => {
                const open = m === "工具(T)";
                return (
                  <MenuSlot key={m}>
                    <MenuButton $open={open} aria-expanded={open}>{m}</MenuButton>
                    {open && <Menu items={toolsMenu} />}
                  </MenuSlot>
                );
              })}
            </MenuList>
            <DocButtons>
              {["min", "restore", "close"].map((k) => (
                <Plain key={k} aria-label={"document " + k}><Pic art={top[k]} size={12} /></Plain>
              ))}
            </DocButtons>
          </MenuBar>

          <DocTabs>
            <DocTab><Plain>开始</Plain></DocTab>
            <DocTab $active>
              <Plain>Drawing1*</Plain>
              <Plain aria-label="close tab">
                <Glyph $w={8} viewBox="0 0 8 8"><path stroke="#a9adb4" strokeWidth="1.800" d="m0 0 8 8M8 0 0 8" /></Glyph>
              </Plain>
            </DocTab>
            <AddTab aria-label="new tab">
              <Glyph $w={8} viewBox="0 0 8 8"><path fill="#a9adb4" d="M3 0h2v3h3v2H5v3H3V5H0V3h3z" /></Glyph>
            </AddTab>
          </DocTabs>

          <Canvas>
            <Viewport>[−][俯视][二维线框]</Viewport>
            <Edge />
            <Cube>
              <Ring />
              <Compass $area="1 / 2">北</Compass>
              <Compass $area="3 / 1">西</Compass>
              <Face><span>上</span></Face>
              <Compass $area="3 / 3">东</Compass>
              <Compass $area="5 / 2">南</Compass>
            </Cube>
            <Wcs>
              WCS
              <Glyph $w={9} $h={5} viewBox="0 0 9 5"><path stroke="#b9bbc6" d="M1 .5h7l-3.500 4z" /></Glyph>
            </Wcs>
            <NavBar>
              <NavCorner aria-label="close bar">
                <Glyph $w={8} viewBox="0 0 8 8"><circle cx="4" cy="4" r="4" fill="#45494e" /><path stroke="#74787c" d="m2 2 4 4M6 2 2 6" /></Glyph>
              </NavCorner>
              <NavButton aria-label="wheel"><Glyph $w={23} viewBox="0 0 23 23">{nav.wheel}</Glyph></NavButton>
              <NavCaret />
              <NavRule />
              <NavButton aria-label="pan"><Glyph $w={24} viewBox="0 0 24 24">{nav.hand}</Glyph></NavButton>
              <NavButton $top={4} aria-label="zoom"><Glyph $w={24} viewBox="0 0 24 24">{nav.zoom}</Glyph></NavButton>
              <NavCaret />
              <NavButton $top={4} aria-label="orbit"><Glyph $w={24} viewBox="0 0 24 24">{nav.orbit}</Glyph></NavButton>
              <NavCaret />
              <NavRule />
              <NavButton aria-label="motion"><Glyph $w={24} viewBox="0 0 24 24">{nav.motion}</Glyph></NavButton>
              <NavCorner $low aria-label="bar options">
                <Glyph $w={8} viewBox="0 0 8 8"><circle cx="4" cy="4" r="4" fill="#45494e" /><path stroke="#74787c" d="M2 3h4M2 5h4" /></Glyph>
              </NavCorner>
            </NavBar>
            <UcsMark $w={76} $h={76} viewBox="0 0 76 76">
              <path stroke="#e8e8e8" d="m9.500 4 6 7M21.500 4l-6 7M15.500 11v6M61.500 57l13 13M74.500 57l-13 13" />
              <path stroke="#ffffff" d="M6.500 21v50.500H57M2.500 66.500h9v9h-9z" />
            </UcsMark>
            <CommandLine>
              <CommandGrip>
                <Glyph $w={5} $h={18} viewBox="0 0 5 18">
                  <path stroke="#b9bcc1" strokeWidth="2" strokeDasharray="2 1" d="M1 0v18M4 0v18" />
                </Glyph>
                <Glyph $w={9} viewBox="0 0 9 9"><path stroke="#b9bcc1" strokeWidth="2" d="m0 0 9 9M9 0 0 9" /></Glyph>
                <Glyph $w={14} viewBox="0 0 14 14"><path stroke="#c3c5c9" strokeWidth="3" d="m1 13 8-8" /><path stroke="#c3c5c9" strokeWidth="2.500" d="M9 1c-2 3 1 6 4 4" /></Glyph>
              </CommandGrip>
              <PromptButton type="button" aria-label="recent commands">
                <Glyph viewBox="0 0 16 16">
                  <path stroke="#555" strokeWidth="1.300" d="M1 3h14v11H1z" />
                  <path fill="#555" d="M0 2h16v3H0z" />
                  <path stroke="#444" d="m3 7 2 2-2 2M6 12h4" />
                </Glyph>
                <DarkCaret />
              </PromptButton>
              <CommandInput aria-label="命令" placeholder="键入命令" />
              <DarkCaret $up />
            </CommandLine>
            <ImeBadge>
              EN
              <Glyph $w={12} viewBox="0 0 12 12"><path stroke="#222" strokeWidth="1.200" d="M5 1c2 4 0 8-4 9 4 3 10 0 10-4 0-3-3-5-6-5z" /></Glyph>
              简
            </ImeBadge>
          </Canvas>

          <Footer>
            <LayoutTabs>
              <LayoutTab $active>模型</LayoutTab>
              <LayoutTab>布局1</LayoutTab>
              <LayoutTab>布局2</LayoutTab>
              <AddTab $bottom aria-label="new layout">
                <Glyph $w={8} viewBox="0 0 8 8"><path fill="#a9adb4" d="M3 0h2v3h3v2H5v3H3V5H0V3h3z" /></Glyph>
              </AddTab>
            </LayoutTabs>
            <StatusBar>
              <Coordinates>456.6793, 1219.4884, 0.0000</Coordinates>
              <StatusGroup $w={31}><StatusButton>模型</StatusButton></StatusGroup>
              <StatusGroup $w={65}><Status icon="grid" /><Status icon="snap" /><Caret /></StatusGroup>
              <StatusGroup $w={24}><Status icon="infer" /></StatusGroup>
              <Status icon="dynamic" on />
              <StatusGroup $w={104}><Status icon="ortho" /><Status icon="polar" /><Caret /><Status icon="iso" /><Caret /></StatusGroup>
              <Status icon="track" on />
              <StatusGroup $w={39}><Status icon="osnap" /><Caret /></StatusGroup>
              <StatusGroup $w={24}><Status icon="weight" /></StatusGroup>
              <Status icon="transp" on />
              <StatusGroup $w={24}><Status icon="cycle" /></StatusGroup>
              <StatusGroup $w={39}><Status icon="osnap3d" /><Caret /></StatusGroup>
              <Status icon="ducs" on />
              <StatusGroup $w={39}><Status icon="filter" /><Caret /></StatusGroup>
              <StatusGroup $w={40}><Status icon="gizmo" on /><Caret /></StatusGroup>
              <StatusGroup $w={147}>
                <Status icon="scaleVis" on />
                <Status icon="scaleAuto" />
                <Status icon="scale" />
                <StatusSelect $w={68}>
                  <select aria-label="注释比例"><option>1:1 / 100%</option></select>
                  <Caret />
                </StatusSelect>
              </StatusGroup>
              <StatusGroup $w={40}><Status icon="gear" /><Caret /></StatusGroup>
              <StatusGroup $w={25}><Status icon="plus" /></StatusGroup>
              <StatusGroup $w={98}>
                <Status icon="ruler" />
                <StatusSelect $w={64}>
                  <select aria-label="单位"><option>小数</option></select>
                  <Caret />
                </StatusSelect>
              </StatusGroup>
              <StatusGroup $w={25}><Status icon="quickProps" /></StatusGroup>
              <StatusGroup $w={39}><Status icon="lock" /><Caret /></StatusGroup>
              <StatusGroup $w={25}><Status icon="isolate" /></StatusGroup>
              <Status icon="graphics" on />
              <StatusGroup $w={48}><Status icon="clean" /><Status icon="custom" /></StatusGroup>
            </StatusBar>
          </Footer>
        </Window>
      </Desktop>

      <Marks $w={380} $h={160} viewBox="0 0 380 160">
        {arrows.map(({ from: [x1, y1], to: [x2, y2] }, i) => {
          const turn = (Math.atan2(y2 - y1, x2 - x1) * 180) / Math.PI;
          const len = Math.hypot(x2 - x1, y2 - y1);
          return (
            <g key={i} transform={`translate(${x2} ${y2}) rotate(${turn})`}>
              <path stroke="#f00" strokeWidth="2.400" d={`M${-len} 0H-14`} />
              <path fill="#f00" d="M0 0-25-8-20 0-25 8z" />
            </g>
          );
        })}
      </Marks>
      <Pointer $w={12} $h={20} viewBox="0 0 12 20">
        <path fill="#fff" stroke="#222" d="M.5 1v14l3-3 3 6 2-1-2.500-5.500h5z" />
      </Pointer>
      <Watermark>
        <Glyph $w={40} viewBox="0 0 40 40">
          <path fill="#1671b8" d="M1 25C3 8 18-1 40 1 24 4 13 12 12 27c-1 2-9 4-11-2z" />
          <path fill="#2f9a3c" d="M0 39c14 1 33-4 36-21-5-3-9-1-13 2 4 8-6 16-23 19z" />
          <path fill="#d5a92c" d="M3 38c11-1 21-6 24-12-2 8-10 13-24 12z" />
        </Glyph>
        <WatermarkText><span>极光下载站</span><small>www.xz7.com</small></WatermarkText>
      </Watermark>
    </>
  );
}
